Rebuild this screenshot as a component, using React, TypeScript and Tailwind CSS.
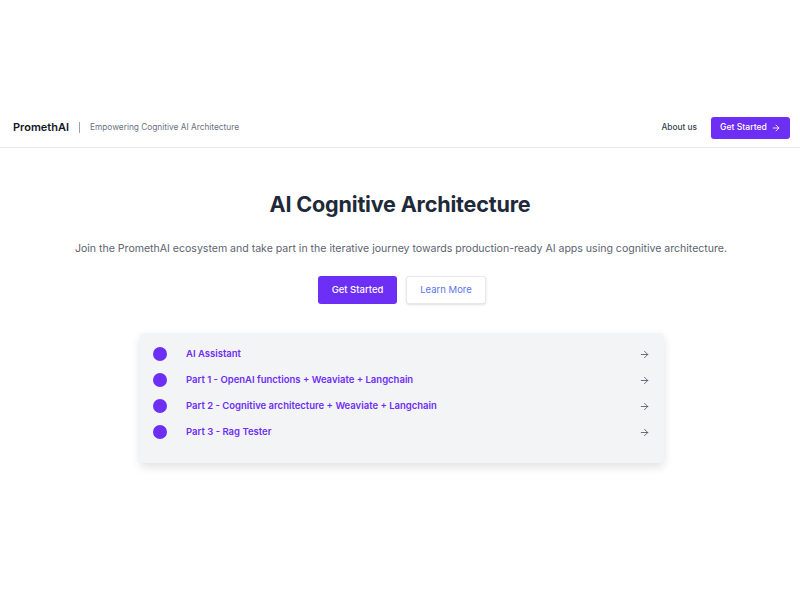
import { ArrowRight } from 'lucide-react'

const links = [
  'AI Assistant',
  'Part 1 - OpenAI functions + Weaviate + Langchain',
  'Part 2 - Cognitive architecture + Weaviate + Langchain',
  'Part 3 - Rag Tester',
]

export default function App() {
  return (
    <div
      className="min-h-[600px] bg-white pt-[108px] text-gray-800"
      style={{ fontFamily: 'Inter, "Noto Sans", sans-serif' }}
    >
      <header className="flex h-10 items-center justify-between border-b border-gray-200 pl-[13px] pr-[10px]">
        <div className="flex items-center">
          <span className="text-[11px] font-semibold text-gray-900">PromethAI</span>
          <span className="mx-[10px] h-[11px] w-px bg-gray-400" />
          <span className="text-[8.3px] text-gray-500">Empowering Cognitive AI Architecture</span>
        </div>
        <div className="flex items-center gap-[14px]">
          <a className="text-[8.3px] font-medium text-gray-700">About us</a>
          <button className="flex h-[22px] w-[79px] items-center justify-center gap-[4px] rounded-[3px] bg-[#6d2ef6] text-[8.6px] font-medium text-white">
            Get Started
            <ArrowRight className="h-[10px] w-[10px]" strokeWidth={2} />
          </button>
        </div>
      </header>

      <main className="flex flex-col items-center">
        <h1 className="mt-[42px] text-[21.6px] font-bold leading-[28px] tracking-[-0.2px] text-gray-800">
          AI Cognitive Architecture
        </h1>
        <p className="ml-[2px] mt-[23px] text-[10.55px] leading-[16px] text-[#5c6370]">
          Join the PromethAI ecosystem and take part in the iterative journey towards production-ready AI apps using
          cognitive architecture.
        </p>
        <div className="ml-[4px] mt-[19px] flex gap-[9px]">
          <button className="h-[28px] w-[79px] rounded-[3px] bg-[#6d2ef6] text-[9.5px] font-medium text-white">
            Get Started
          </button>
          <button className="h-[28px] w-[80px] rounded-[3px] border border-gray-200 bg-white text-[9.5px] text-[#5b74f0] shadow-sm">
            Learn More
          </button>
        </div>

        <div className="ml-[4px] mt-[29px] w-[524px] rounded-[4px] bg-gray-100 pb-[18px] pl-[13px] pr-[14px] pt-[8px] shadow-[0_4px_10px_rgba(0,0,0,0.12)]">
          {links.map((l) => (
            <div key={l} className="flex h-[26px] items-center">
              <span className="h-[14px] w-[14px] rounded-full bg-[#6d2ef6]" />
              <span className="ml-[19px] flex-1 text-[9.5px] font-semibold text-[#6d2ef6]">{l}</span>
              <ArrowRight className="h-[11px] w-[11px] text-gray-700" strokeWidth={1.6} />
            </div>
          ))}
        </div>
      </main>
    </div>
  )
}
